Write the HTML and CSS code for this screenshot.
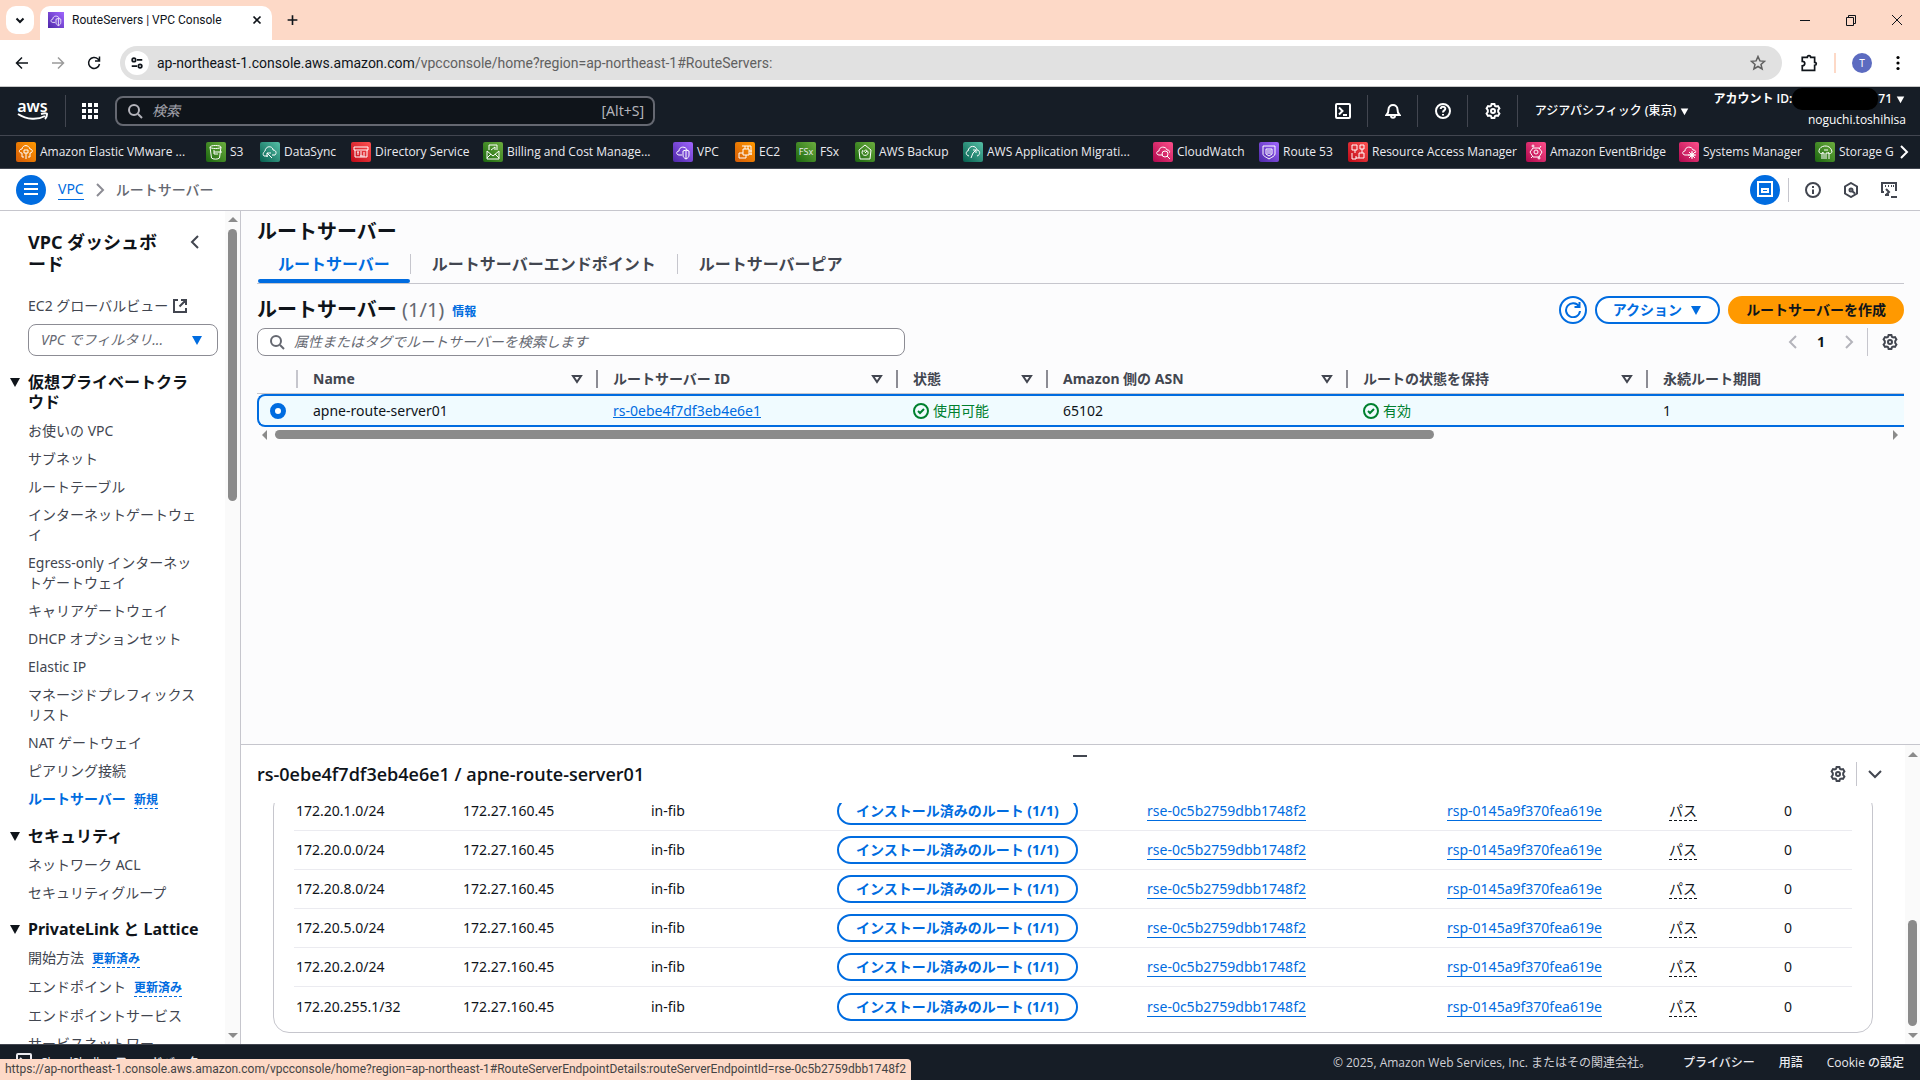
FILE: index.html
```html
<!DOCTYPE html>
<html lang="ja">
<head>
  <meta charset="UTF-8" />
  <meta name="viewport" content="width=device-width, initial-scale=1.0"/>
  <title>RouteServers | VPC Console</title>
  <link rel="stylesheet" href="styles.css">
</head>
<body>
  <!-- Shared icons -->
  <svg class="sprite" aria-hidden="true">
    <symbol id="i-gear" viewBox="0 0 16 16"><path d="M6.600 1h2.800l.5 1.800 1.300.7 1.800-.4 1.400 2.400L13.200 7v2l1.200 1.500-1.400 2.400-1.800-.4-1.300.7-.5 1.800H6.600l-.5-1.800-1.300-.7-1.800.4-1.400-2.400L2.800 9V7L1.600 5.500 3 3.100l1.800.4 1.300-.7z"/><circle cx="8" cy="8" r="2"/></symbol>
    <symbol id="i-search" viewBox="0 0 16 16"><circle cx="7" cy="7" r="5"/><path d="M11 11l4 4"/></symbol>
    <symbol id="i-left" viewBox="0 0 16 16"><path d="M11 2L5 8l6 6"/></symbol>
    <symbol id="i-right" viewBox="0 0 16 16"><path d="M5 2l6 6-6 6"/></symbol>
    <symbol id="i-down" viewBox="0 0 16 16"><path d="M2 5l6 6 6-6"/></symbol>
    <symbol id="i-filter" viewBox="0 0 16 16"><path d="M4 5h8l-4 6z"/></symbol>
    <symbol id="i-check" viewBox="0 0 16 16"><circle cx="8" cy="8" r="7"/><path d="M5 8l2 2 4-4"/></symbol>
    <symbol id="i-caret" viewBox="0 0 12 12"><path d="M1 2h10L6 11z"/></symbol>
    <symbol id="i-cloud" viewBox="0 0 20 20"><path d="M10 13H6c-3 0-3-4 0-4 0-5 7-5 8-1 3 0 3 2 2 3"/></symbol>
  </svg>

  <div class="tabstrip">
    <button class="tab-search" aria-label="タブを検索"><svg class="ic" viewBox="0 0 16 16"><path d="M4.500 6.500L8 10l3.500-3.500"/></svg></button>
    <div class="browser-tab">
      <span class="svc purple"><svg viewBox="0 0 20 20"><path d="M9 13H6c-3 0-3-4 0-4 0-5 7-5 8-1M10 9l3-1 3 1v4c0 2-1 3-3 4-2-1-3-2-3-4zM13 8v9"/></svg></span>
      <span class="browser-tab-title">RouteServers | VPC Console</span>
      <button class="plain" aria-label="閉じる"><svg class="ic" viewBox="0 0 16 16"><path d="M4 4l8 8M12 4l-8 8"/></svg></button>
    </div>
    <button class="plain new-tab" aria-label="新しいタブ"><svg class="ic" viewBox="0 0 16 16"><path d="M8 2v12M2 8h12"/></svg></button>
    <div class="window-controls">
      <button class="plain" aria-label="最小化"><svg class="thin" viewBox="0 0 16 16"><path d="M3 8.500h10"/></svg></button>
      <button class="plain" aria-label="元に戻す"><svg class="thin" viewBox="0 0 16 16"><path d="M3.500 5.500h7v8h-7zM5.500 5.500v-2h7v8h-2"/></svg></button>
      <button class="plain" aria-label="ウィンドウを閉じる"><svg class="thin" viewBox="0 0 16 16"><path d="M3 3l10 10M13 3L3 13"/></svg></button>
    </div>
  </div>

  <div class="toolbar">
    <button class="plain" aria-label="戻る"><svg class="ic" viewBox="0 0 16 16"><path d="M14 8H2.500M8 2.500L2.500 8 8 13.500"/></svg></button>
    <button class="plain disabled" aria-label="進む"><svg class="ic" viewBox="0 0 16 16"><path d="M2 8h11.500M8 2.500L13.500 8 8 13.500"/></svg></button>
    <button class="plain" aria-label="再読み込み"><svg class="ic" viewBox="0 0 16 16"><path d="M13.500 9A5.500 5.500 0 1 1 12 4l1.500 1.500M13.500 1.500v4.500H9"/></svg></button>
    <div class="address">
      <span class="site-info"><svg class="ic" viewBox="0 0 16 16"><circle cx="4.500" cy="4.500" r="2"/><path d="M8 4.500h6M2 11.500h6"/><circle cx="11.500" cy="11.500" r="2"/></svg></span>
      <span class="url">ap-northeast-1.console.aws.amazon.com<span class="url-path">/vpcconsole/home?region=ap-northeast-1#RouteServers:</span></span>
      <button class="plain star" aria-label="ブックマーク"><svg class="ic" viewBox="0 0 16 16"><path d="M8 1.500l1.900 4.400 4.600.4-3.500 3.100 1.100 4.600L8 11.500 3.900 14 5 9.400 1.500 6.300l4.600-.4z"/></svg></button>
    </div>
    <button class="plain ext" aria-label="拡張機能"><svg class="ic" viewBox="0 0 16 16"><path d="M2 3h4.500c0-2 3-2 3 0H13v4.500c2 0 2 2.500 0 2.500v4.500H2v-4c3 0 3-4 0-4z"/></svg></button>
    <span class="toolbar-sep"></span>
    <span class="avatar">T</span>
    <button class="plain" aria-label="メニュー"><svg class="dots" viewBox="0 0 16 16"><circle cx="8" cy="2.500" r="1.600"/><circle cx="8" cy="8" r="1.600"/><circle cx="8" cy="13.500" r="1.600"/></svg></button>
  </div>

  <header class="aws-header">
    <a class="aws-logo" href="#" aria-label="aws"><span>aws</span><svg viewBox="0 0 32 10"><path d="M1 2c9 6 20 6 27 2"/><path d="M24 2c3-1 6-1 6 0s-1 4-2 5"/></svg></a>
    <button class="plain apps" aria-label="サービス"><svg viewBox="0 0 16 16"><path d="M0 0h4v4H0zM6 0h4v4H6zM12 0h4v4h-4zM0 6h4v4H0zM6 6h4v4H6zM12 6h4v4h-4zM0 12h4v4H0zM6 12h4v4H6zM12 12h4v4h-4z"/></svg></button>
    <label class="global-search">
      <svg class="ic"><use href="#i-search"/></svg>
      <input type="text" placeholder="検索" aria-label="検索">
      <span>[Alt+S]</span>
    </label>
    <div class="header-icons">
      <button class="plain" aria-label="CloudShell"><svg class="ic" viewBox="0 0 16 16"><rect x="1" y="1" width="14" height="14" rx="1"/><path d="M4 4.500L7.500 8 4 11.500M8 12h4"/></svg></button>
      <button class="plain" aria-label="通知"><svg class="ic" viewBox="0 0 16 16"><path d="M1.500 12c2-2 2-3 2-5.500 0-6 9-6 9 0 0 2.500 0 3.500 2 5.500zM6 12.500c0 3 4 3 4 0"/></svg></button>
      <button class="plain" aria-label="ヘルプ"><svg class="ic" viewBox="0 0 16 16"><circle cx="8" cy="8" r="7"/><path d="M5.700 6c0-3 4.600-3 4.600-.3C10.300 7.500 8 7.300 8 9.500M8 11v1.500"/></svg></button>
      <button class="plain" aria-label="設定"><svg class="ic"><use href="#i-gear"/></svg></button>
    </div>
    <button class="plain region">アジアパシフィック (東京) <svg class="caret"><use href="#i-caret"/></svg></button>
    <div class="account">
      <div class="account-id">アカウント ID:<span class="redacted"></span>71 <svg class="caret"><use href="#i-caret"/></svg></div>
      <div class="account-user">noguchi.toshihisa</div>
    </div>
  </header>

  <nav class="favorites">
    <a href="#"><span class="svc orange"><svg viewBox="0 0 20 20"><path d="M6 11c-4 0-3-4 0-4 1-5 7-4 8 0 3 0 3 4 0 4M8 8h4v3H8zM6 11v4h2M10 11v6M14 11v4h-2"/></svg></span>Amazon Elastic VMware ...</a>
    <a href="#"><span class="svc green"><svg viewBox="0 0 20 20"><path d="M4 5c0-2 11-2 11 0s-11 2-11 0l1.500 11c1 1.500 7 1.500 8 0L15 5M8 10h8M8 8v4h4"/></svg></span>S3</a>
    <a href="#"><span class="svc teal"><svg viewBox="0 0 20 20"><path d="M8 14H4c-2-2 0-4 1-5 1-6 8-5 8-1 3 0 4 3 2 5h-3M7 11l5 5M7 15v-4h4"/></svg></span>DataSync</a>
    <a href="#"><span class="svc red"><svg viewBox="0 0 20 20"><path d="M3 5h14v3H3zM4 8v7h12V8M7 10v3M10 9v5M13 10v3M6 10h2M9 14h5"/></svg></span>Directory Service</a>
    <a href="#"><span class="svc green"><svg viewBox="0 0 20 20"><path d="M4 9v8h12V9l-6 5zM4 16l4-4M16 16l-4-4M6 8V3h8v5M8 8l4-3M12 5v3"/></svg></span>Billing and Cost Manage...</a>
    <a href="#"><span class="svc purple"><svg viewBox="0 0 20 20"><path d="M9 13H6c-3 0-3-4 0-4 0-5 7-5 8-1M10 9l3-1 3 1v4c0 2-1 3-3 4-2-1-3-2-3-4zM13 8v9"/></svg></span>VPC</a>
    <a href="#"><span class="svc orange"><svg viewBox="0 0 20 20"><path d="M8 7h6v6H8zM7 4h9v9M4 11v5h7v-3M4 11h4M10 4v3M13 4v3M14 9h3M14 12h3"/></svg></span>EC2</a>
    <a href="#"><span class="svc green fsx">FSx</span>FSx</a>
    <a href="#"><span class="svc green"><svg viewBox="0 0 20 20"><path d="M4 8l6-5 6 5-1 9H5zM8 8l-1 2c0 5 7 4 6 0-1-3-4-2-4 0M10 11l2-2"/></svg></span>AWS Backup</a>
    <a href="#"><span class="svc teal"><svg viewBox="0 0 20 20"><path d="M6 14c-4-1-3-5-1-5 1-6 8-6 9-1 3 0 4 5 0 6M8 16l2-5 3-3M10 8h3v3"/></svg></span>AWS Application Migrati...</a>
    <a href="#"><span class="svc pink"><svg viewBox="0 0 20 20"><use href="#i-cloud"/><circle cx="12" cy="12" r="3"/><path d="M14 14l3 3"/></svg></span>CloudWatch</a>
    <a href="#"><span class="svc purple"><svg viewBox="0 0 20 20"><path d="M4 4h12v8c0 2-3 3-6 5-3-2-6-3-6-5zM7 7h6v5l-3 2-3-2zM8 9h4M8 11h4"/></svg></span>Route 53</a>
    <a href="#"><span class="svc red"><svg viewBox="0 0 20 20"><path d="M4 3h5v5H4zM12 3h4v4h-4zM4 11v6h4v-3M11 11h5v5h-5zM7 8v3M14 7v4M8 16h3"/></svg></span>Resource Access Manager</a>
    <a href="#"><span class="svc pink"><svg viewBox="0 0 20 20"><path d="M7 6h6l3 4-3 5H7l-3-5z"/><circle cx="10" cy="10" r="2"/><circle cx="7" cy="4" r="1"/><circle cx="13" cy="16" r="1"/><path d="M15 4l-2 3M5 16l2-2"/></svg></span>Amazon EventBridge</a>
    <a href="#"><span class="svc pink"><svg viewBox="0 0 20 20"><use href="#i-cloud"/><circle cx="13" cy="13" r="2"/><path d="M13 9v8M9 13h8M10 10l6 6M16 10l-6 6"/></svg></span>Systems Manager</a>
    <a href="#" class="cut"><span class="svc green"><svg viewBox="0 0 20 20"><path d="M4 10c-1-7 12-9 13 0-1 2-3 2-4 0M4 10c1 2 3 2 4 0M7 17v-6h2v6M11 17v-6h3v6M9 8h4"/></svg></span>Storage G</a>
    <button class="plain" aria-label="次へ"><svg class="ic"><use href="#i-right"/></svg></button>
  </nav>

  <div class="crumb-bar">
    <button class="round" aria-label="ナビゲーション"><svg class="ic" viewBox="0 0 16 16"><path d="M1 3h14M1 8h14M1 13h14"/></svg></button>
    <a class="crumb" href="#">VPC</a>
    <svg class="ic crumb-sep"><use href="#i-right"/></svg>
    <span class="crumb-current">ルートサーバー</span>
    <div class="crumb-tools">
      <button class="round" aria-label="分割パネル"><svg class="ic" viewBox="0 0 16 16"><path d="M1 1h14v14H1zM5 8h6v3H5z"/></svg></button>
      <span class="vsep"></span>
      <button class="plain" aria-label="情報"><svg class="ic" viewBox="0 0 16 16"><circle cx="8" cy="8" r="7"/><path d="M8 4v2M8 7.500V12"/></svg></button>
      <button class="plain" aria-label="Amazon Q"><svg class="ic" viewBox="0 0 16 16"><path d="M8 1l6 3.500v7L8 15l-6-3.500v-7z"/><circle cx="8" cy="8" r="1.500"/><path d="M9 9l3 2.500"/></svg></button>
      <button class="plain" aria-label="コンソール"><svg class="ic" viewBox="0 0 16 16"><path d="M3 10H1V1h14v8M4 4h1M7 4h1M10 4h1M12 4h1M4 13h4M5 7l3 3-3 3M10 15h6"/></svg></button>
    </div>
  </div>

  <div class="workspace">
    <aside class="sidebar">
      <nav class="side-nav">
        <div class="side-title">
          <a href="#">VPC ダッシュボード</a>
          <button class="plain" aria-label="閉じる"><svg class="ic"><use href="#i-left"/></svg></button>
        </div>
        <a class="global-view" href="#">EC2 グローバルビュー <svg class="ic" viewBox="0 0 16 16"><path d="M6 2H2v12h12v-4M9 2h5v5M14 2L7.500 8.500"/></svg></a>
        <div class="vpc-filter">
          <select aria-label="VPC でフィルタリング"><option>VPC でフィルタリ...</option></select>
          <svg class="caret"><use href="#i-caret"/></svg>
        </div>
        <h3><svg class="caret"><use href="#i-caret"/></svg>仮想プライベートクラウド</h3>
        <ul>
          <li><a href="#">お使いの VPC</a></li>
          <li><a href="#">サブネット</a></li>
          <li><a href="#">ルートテーブル</a></li>
          <li><a href="#">インターネットゲートウェイ</a></li>
          <li><a href="#">Egress-only インターネットゲートウェイ</a></li>
          <li><a href="#">キャリアゲートウェイ</a></li>
          <li><a href="#">DHCP オプションセット</a></li>
          <li><a href="#">Elastic IP</a></li>
          <li><a href="#">マネージドプレフィックスリスト</a></li>
          <li><a href="#">NAT ゲートウェイ</a></li>
          <li><a href="#">ピアリング接続</a></li>
          <li><a class="current" href="#">ルートサーバー</a><span class="tag">新規</span></li>
        </ul>
        <h3><svg class="caret"><use href="#i-caret"/></svg>セキュリティ</h3>
        <ul>
          <li><a href="#">ネットワーク ACL</a></li>
          <li><a href="#">セキュリティグループ</a></li>
        </ul>
        <h3><svg class="caret"><use href="#i-caret"/></svg>PrivateLink と Lattice</h3>
        <ul>
          <li><a href="#">開始方法</a><span class="tag">更新済み</span></li>
          <li><a href="#">エンドポイント</a><span class="tag">更新済み</span></li>
          <li><a href="#">エンドポイントサービス</a></li>
          <li><a href="#">サービスネットワー</a></li>
        </ul>
      </nav>
      <div class="vscroll">
        <span class="arrow up"></span>
        <span class="track"><span class="thumb thumb-side"></span></span>
        <span class="arrow down"></span>
      </div>
    </aside>

    <div class="content">
      <main class="main">
        <h1>ルートサーバー</h1>
        <div class="tabs" role="tablist">
          <button role="tab" class="active" aria-selected="true">ルートサーバー</button>
          <button role="tab">ルートサーバーエンドポイント</button>
          <button role="tab">ルートサーバーピア</button>
        </div>
        <div class="list-head">
          <h2>ルートサーバー <span class="count">(1/1)</span></h2>
          <a class="info" href="#">情報</a>
          <div class="actions">
            <button class="btn btn-icon" aria-label="更新"><svg class="ic" viewBox="0 0 16 16"><path d="M15 9A7 7 0 1 1 14 4.500M14.500 0v5H9.500"/></svg></button>
            <button class="btn btn-action">アクション <svg class="caret"><use href="#i-caret"/></svg></button>
            <button class="btn btn-primary">ルートサーバーを作成</button>
          </div>
        </div>
        <div class="filter-row">
          <label class="filter-box">
            <svg class="ic"><use href="#i-search"/></svg>
            <input type="text" placeholder="属性またはタグでルートサーバーを検索します" aria-label="ルートサーバーを検索">
          </label>
          <div class="pager">
            <button class="plain off" aria-label="前のページ"><svg class="ic"><use href="#i-left"/></svg></button>
            <span class="page">1</span>
            <button class="plain off" aria-label="次のページ"><svg class="ic"><use href="#i-right"/></svg></button>
            <span class="vsep"></span>
            <button class="plain" aria-label="表示設定"><svg class="ic"><use href="#i-gear"/></svg></button>
          </div>
        </div>
        <table class="servers">
          <colgroup><col class="c-radio"><col class="c-wide"><col class="c-wide"><col class="c-state"><col class="c-wide"><col class="c-wide"><col></colgroup>
          <thead>
            <tr>
              <th></th>
              <th><div class="th">Name <svg class="ic"><use href="#i-filter"/></svg></div></th>
              <th><div class="th">ルートサーバー ID <svg class="ic"><use href="#i-filter"/></svg></div></th>
              <th><div class="th">状態 <svg class="ic"><use href="#i-filter"/></svg></div></th>
              <th><div class="th">Amazon 側の ASN <svg class="ic"><use href="#i-filter"/></svg></div></th>
              <th><div class="th">ルートの状態を保持 <svg class="ic"><use href="#i-filter"/></svg></div></th>
              <th><div class="th">永続ルート期間</div></th>
            </tr>
          </thead>
          <tbody>
            <tr>
              <td><input type="radio" name="server" aria-label="apne-route-server01" checked></td>
              <td>apne-route-server01</td>
              <td><a href="#">rs-0ebe4f7df3eb4e6e1</a></td>
              <td><span class="ok"><svg class="ic"><use href="#i-check"/></svg>使用可能</span></td>
              <td>65102</td>
              <td><span class="ok"><svg class="ic"><use href="#i-check"/></svg>有効</span></td>
              <td>1</td>
            </tr>
          </tbody>
        </table>
        <div class="hscroll">
          <span class="arrow left"></span>
          <span class="track"><span class="thumb"></span></span>
          <span class="arrow right"></span>
        </div>
      </main>

      <section class="split">
        <div class="split-body">
          <div class="handle"></div>
          <div class="split-head">
            <h2>rs-0ebe4f7df3eb4e6e1 / apne-route-server01</h2>
            <button class="plain" aria-label="設定"><svg class="ic"><use href="#i-gear"/></svg></button>
            <span class="vsep"></span>
            <button class="plain" aria-label="閉じる"><svg class="ic"><use href="#i-down"/></svg></button>
          </div>
          <div class="split-scroll">
            <div class="panel">
              <table class="routes">
                <colgroup><col class="r-prefix"><col class="r-hop"><col class="r-fib"><col class="r-btn"><col class="r-rse"><col class="r-rsp"><col class="r-path"><col></colgroup>
                <tbody>
                  <tr>
                    <td>172.20.1.0/24</td><td>172.27.160.45</td><td>in-fib</td>
                    <td><button class="btn">インストール済みのルート (1/1)</button></td>
                    <td><a href="#">rse-0c5b2759dbb1748f2</a></td><td><a href="#">rsp-0145a9f370fea619e</a></td>
                    <td><span class="path">パス</span></td><td>0</td>
                  </tr>
                  <tr>
                    <td>172.20.0.0/24</td><td>172.27.160.45</td><td>in-fib</td>
                    <td><button class="btn">インストール済みのルート (1/1)</button></td>
                    <td><a href="#">rse-0c5b2759dbb1748f2</a></td><td><a href="#">rsp-0145a9f370fea619e</a></td>
                    <td><span class="path">パス</span></td><td>0</td>
                  </tr>
                  <tr>
                    <td>172.20.8.0/24</td><td>172.27.160.45</td><td>in-fib</td>
                    <td><button class="btn">インストール済みのルート (1/1)</button></td>
                    <td><a href="#">rse-0c5b2759dbb1748f2</a></td><td><a href="#">rsp-0145a9f370fea619e</a></td>
                    <td><span class="path">パス</span></td><td>0</td>
                  </tr>
                  <tr>
                    <td>172.20.5.0/24</td><td>172.27.160.45</td><td>in-fib</td>
                    <td><button class="btn">インストール済みのルート (1/1)</button></td>
                    <td><a href="#">rse-0c5b2759dbb1748f2</a></td><td><a href="#">rsp-0145a9f370fea619e</a></td>
                    <td><span class="path">パス</span></td><td>0</td>
                  </tr>
                  <tr>
                    <td>172.20.2.0/24</td><td>172.27.160.45</td><td>in-fib</td>
                    <td><button class="btn">インストール済みのルート (1/1)</button></td>
                    <td><a href="#">rse-0c5b2759dbb1748f2</a></td><td><a href="#">rsp-0145a9f370fea619e</a></td>
                    <td><span class="path">パス</span></td><td>0</td>
                  </tr>
                  <tr>
                    <td>172.20.255.1/32</td><td>172.27.160.45</td><td>in-fib</td>
                    <td><button class="btn">インストール済みのルート (1/1)</button></td>
                    <td><a href="#">rse-0c5b2759dbb1748f2</a></td><td><a href="#">rsp-0145a9f370fea619e</a></td>
                    <td><span class="path">パス</span></td><td>0</td>
                  </tr>
                </tbody>
              </table>
            </div>
          </div>
        </div>
        <div class="vscroll">
          <span class="arrow up"></span>
          <span class="track track-end"><span class="thumb thumb-split"></span></span>
          <span class="arrow down"></span>
        </div>
      </section>
    </div>
  </div>

  <footer class="footer">
    <a href="#" class="shell"><svg class="ic" viewBox="0 0 16 16"><rect x="1" y="1" width="14" height="14" rx="1"/><path d="M4 5l3 3-3 3M8 11h4"/></svg>CloudShell</a>
    <a href="#">フィードバック</a>
    <span class="copyright">© 2025, Amazon Web Services, Inc. またはその関連会社。</span>
    <a href="#">プライバシー</a>
    <a href="#">用語</a>
    <a href="#">Cookie の設定</a>
  </footer>

  <!-- Link target shown by the browser -->
  <div class="status-bubble">https://ap-northeast-1.console.aws.amazon.com/vpcconsole/home?region=ap-northeast-1#RouteServerEndpointDetails:routeServerEndpointId=rse-0c5b2759dbb1748f2</div>
</body>
</html>
```
FILE: styles.css
```css
* {
  box-sizing: border-box;
}

body {
  margin: 0;
  height: 100vh;
  display: flex;
  flex-direction: column;
  overflow: hidden;
  font-family: "Noto Sans", "Noto Sans CJK JP", sans-serif;
  font-size: 14px;
  line-height: 20px;
  color: #0f141a;
  background: #fff;
}

button, input, select {
  font: inherit;
  color: inherit;
}

button {
  cursor: pointer;
}

a {
  color: #006ce0;
}

h1, h2, h3, ul {
  margin: 0;
  padding: 0;
}

.sprite {
  display: none;
}

.ic, .thin {
  width: 16px;
  height: 16px;
  flex: none;
  fill: none;
  stroke: currentColor;
  stroke-width: 2;
}

.thin {
  stroke-width: 1;
}

.caret {
  width: 12px;
  height: 12px;
  flex: none;
  fill: currentColor;
}

.plain {
  display: flex;
  align-items: center;
  justify-content: center;
  padding: 0;
  border: 0;
  background: none;
}

.vsep {
  width: 1px;
  background: #c6c6cd;
}

/* Browser chrome */
.tabstrip {
  flex: none;
  height: 40px;
  display: flex;
  align-items: flex-start;
  padding: 6px 6px 0;
  background: #fdd9c7;
}

.tab-search {
  width: 28px;
  height: 28px;
  padding: 6px;
  border: 0;
  border-radius: 10px;
  background: #fff;
}

.tab-search svg {
  display: block;
}

.browser-tab {
  display: flex;
  align-items: center;
  gap: 8px;
  width: 232px;
  height: 34px;
  margin-left: 6px;
  padding: 0 8px 6px;
  border-radius: 10px 10px 0 0;
  background: #fff;
  font-family: Roboto, sans-serif;
  font-size: 12px;
}

.browser-tab .svc {
  width: 16px;
  height: 16px;
  border-radius: 0;
}

.browser-tab-title {
  flex: 1;
}

.browser-tab .ic {
  width: 14px;
  height: 14px;
}

.new-tab {
  width: 28px;
  height: 28px;
  margin-left: 6px;
}

.new-tab svg {
  width: 13px;
}

.window-controls {
  display: flex;
  gap: 30px;
  margin-left: auto;
  padding: 6px 9px;
}

.toolbar {
  flex: none;
  height: 47px;
  display: flex;
  align-items: center;
  padding: 0 14px;
  border-bottom: 1px solid #c8c8c8;
  gap: 20px;
}

.toolbar > .plain .ic {
  stroke-width: 1.5;
}

.disabled {
  color: #9b9b9b;
}

.address {
  flex: 1;
  display: flex;
  align-items: center;
  height: 34px;
  margin: 0 -2px;
  padding: 0 16px 0 5px;
  border-radius: 17px;
  background: #e1e1e1;
  font-family: Roboto, sans-serif;
}

.site-info {
  display: flex;
  align-items: center;
  justify-content: center;
  width: 24px;
  height: 24px;
  margin-right: 8px;
  border-radius: 50%;
  background: #fff;
}

.site-info .ic {
  width: 14px;
}

.url {
  flex: 1;
}

.url-path, .star {
  color: #606060;
}

.star .ic {
  stroke-width: 1.5;
}

.ext .ic {
  width: 18px;
  height: 18px;
}

.toolbar-sep {
  width: 2px;
  height: 20px;
  margin: 0 -4px;
  background: #fdd9c7;
}

.avatar {
  width: 20px;
  height: 20px;
  margin-right: -2px;
  border-radius: 50%;
  background: #5c6bc0;
  color: #fff;
  font-size: 10px;
  text-align: center;
}

.dots {
  width: 16px;
  height: 16px;
}

/* AWS header */
.aws-header {
  flex: none;
  height: 49px;
  display: flex;
  align-items: center;
  border-bottom: 1px solid #424650;
  background: #161d26;
  color: #fff;
}

.aws-logo {
  display: flex;
  flex-direction: column;
  align-items: center;
  justify-content: center;
  width: 66px;
  height: 32px;
  border-right: 1px solid #424650;
  color: #fff;
  font-size: 16px;
  font-weight: 600;
  line-height: 12px;
  text-decoration: none;
}

.aws-logo svg {
  width: 32px;
  height: 10px;
  fill: none;
  stroke: #fff;
  stroke-width: 2;
}

.apps {
  width: 49px;
  padding-right: 2px;
}

.apps svg {
  width: 16px;
  height: 16px;
  fill: #fff;
}

.global-search {
  display: flex;
  align-items: center;
  width: 540px;
  height: 30px;
  padding: 0 9px 0 10px;
  border: 2px solid #656871;
  border-radius: 8px;
  background: #0f141a;
  color: #b4b4bb;
}

.global-search input, .filter-box input {
  flex: 1;
  min-width: 0;
  padding: 0 9px;
  border: 0;
  outline: 0;
  background: none;
}

.global-search input::placeholder {
  color: #a4a4ad;
  font-style: italic;
}

.header-icons {
  display: flex;
  margin-left: auto;
}

.header-icons button {
  width: 50px;
  height: 32px;
  border-right: 1px solid #424650;
}

.region {
  width: 190px;
  gap: 4px;
  padding-right: 2px;
  font-size: 12px;
  font-weight: 500;
}

.region .caret, .account .caret {
  width: 9px;
  height: 9px;
}

.account {
  width: 212px;
  padding: 0 14px 4px 0;
  font-family: "Open Sans", "Noto Sans CJK JP", sans-serif;
  font-size: 12px;
  text-align: right;
}

.account-id {
  display: flex;
  align-items: center;
  justify-content: flex-end;
  font-weight: 600;
}

.account .caret {
  margin: 0 1px 0 4px;
}

.redacted {
  width: 86px;
  height: 22px;
  border-radius: 10px;
  background: #000;
}

/* Favorites */
.favorites {
  flex: none;
  height: 33px;
  display: grid;
  grid-template-columns: 190px 54px 91px 132px 190px 62px 61px 59px 108px 190px 106px 89px 178px 153px 136px 79px 1fr;
  align-items: center;
  padding: 0 6px 0 16px;
  border-bottom: 1px solid #424650;
  background: #161d26;
  color: #fff;
}

.favorites a {
  display: flex;
  align-items: center;
  gap: 4px;
  color: #ebebf0;
  font-family: "Open Sans", sans-serif;
  font-size: 12px;
  text-decoration: none;
  white-space: nowrap;
}

.favorites .cut {
  overflow: hidden;
}

.svc {
  display: block;
  flex: none;
  width: 20px;
  height: 20px;
  border-radius: 2px;
}

.svc svg {
  display: block;
  width: 100%;
  height: 100%;
  fill: none;
  stroke: #fff;
  stroke-width: 1;
}

.fsx {
  font-size: 9px;
  text-align: center;
}

.orange { background: linear-gradient(45deg, #d45b07, #ff9900); }
.green { background: linear-gradient(45deg, #1b660f, #6cae3e); }
.teal { background: linear-gradient(45deg, #055f4e, #56c0a7); }
.red { background: linear-gradient(45deg, #bd0816, #ff5252); }
.purple { background: linear-gradient(45deg, #4d27a8, #a166ff); }
.pink { background: linear-gradient(45deg, #b0084d, #ff4f8b); }

/* Breadcrumbs */
.crumb-bar {
  flex: none;
  height: 42px;
  display: flex;
  align-items: center;
  padding: 0 23px 0 16px;
  border-bottom: 1px solid #c6c6cd;
}

.round {
  display: flex;
  align-items: center;
  justify-content: center;
  width: 30px;
  height: 30px;
  padding: 0 0 2px;
  border: 0;
  border-radius: 50%;
  background: #006ce0;
  color: #fff;
}

.crumb {
  margin-left: 12px;
  border-bottom: 1px solid #006ce0;
  text-decoration: none;
}

.crumb-sep {
  margin: 0 8px;
  color: #8c8c94;
}

.crumb-current {
  color: #656871;
  font-weight: 500;
}

.crumb-tools {
  display: flex;
  align-items: center;
  margin-left: auto;
  color: #424650;
}

.crumb-tools .vsep {
  height: 24px;
  margin: 0 16px 0 8px;
}

.crumb-tools .plain + .plain {
  margin-left: 22px;
}

/* Sidebar */
.workspace {
  flex: 1;
  min-height: 0;
  display: flex;
}

.sidebar {
  flex: none;
  width: 241px;
  display: flex;
  overflow: hidden;
  border-right: 1px solid #c6c6cd;
}

.side-nav {
  flex: 1;
  padding: 20px 7px 0 28px;
}

.side-nav a {
  color: #424650;
  text-decoration: none;
}

.side-title {
  display: flex;
  align-items: flex-start;
  justify-content: space-between;
  padding-right: 15px;
  font-size: 18px;
  font-weight: 700;
  line-height: 22px;
}

.side-title a {
  width: 136px;
  color: #0f141a;
  word-break: break-all;
}

.side-title .plain {
  height: 22px;
  color: #424650;
}

.side-nav .global-view {
  display: flex;
  align-items: center;
  gap: 4px;
  margin: 21px 0 8px;
}

.vpc-filter {
  position: relative;
  color: #006ce0;
}

.vpc-filter select {
  width: 100%;
  height: 32px;
  padding: 0 36px 0 12px;
  border: 1px solid #8c8c94;
  border-radius: 8px;
  appearance: none;
  background: #fff;
  color: #656871;
  font-style: italic;
}

.vpc-filter .caret {
  position: absolute;
  top: 10px;
  right: 15px;
}

.side-nav h3 {
  position: relative;
  margin-top: 16px;
  padding: 0 15px 1px 0;
  font-size: 16px;
  line-height: 20px;
  word-break: break-all;
}

.side-nav h3 .caret {
  position: absolute;
  top: 4px;
  left: -19px;
}

.side-nav ul {
  list-style: none;
}

.side-nav li {
  margin-top: 8px;
  padding-right: 20px;
  word-break: break-all;
}

.side-nav .current {
  color: #006ce0;
  font-weight: 700;
}

.tag {
  margin-left: 8px;
  border-bottom: 1px dashed #006ce0;
  color: #006ce0;
  font-size: 12px;
  font-weight: 700;
}

/* Scrollbars */
.vscroll {
  flex: none;
  width: 15px;
  display: flex;
  flex-direction: column;
  align-items: center;
  padding: 6px 0;
  background: #fafafa;
}

.track {
  flex: 1;
  display: flex;
}

.vscroll .track {
  margin: 7px 0;
}

.track-end {
  align-items: flex-end;
}

.thumb {
  border-radius: 5px;
  background: #8b8b8b;
}

.thumb-side, .thumb-split {
  width: 9px;
  height: 272px;
}

.thumb-split {
  height: 106px;
}

.arrow {
  border: 5px solid transparent;
}

.up {
  border-top: 0;
  border-bottom-color: #8b8b8b;
}

.down {
  border-bottom: 0;
  border-top-color: #8b8b8b;
}

.left {
  border-left: 0;
  border-right-color: #8b8b8b;
}

.right {
  border-right: 0;
  border-left-color: #8b8b8b;
}

/* Main */
.content {
  flex: 1;
  min-width: 0;
  display: flex;
  flex-direction: column;
}

.main {
  flex: 1;
  min-height: 0;
  padding: 9px 16px 0;
  background: #fcfcfd;
}

h1, .list-head h2 {
  font-size: 20px;
  line-height: 24px;
}

.tabs {
  display: flex;
  align-items: center;
  height: 40px;
  border-bottom: 1px solid #c6c6cd;
  padding-left: 1px;
}

.tabs button {
  height: 20px;
  padding: 0 20px;
  border: 0;
  border-right: 1px solid #c6c6cd;
  background: none;
  color: #424650;
  font-size: 16px;
  font-weight: 700;
  line-height: 20px;
}

.tabs button + button {
  padding: 0 21px;
}

.tabs button:last-child {
  border-right: 0;
}

.tabs .active {
  position: relative;
  color: #006ce0;
}

.tabs .active::after {
  content: "";
  position: absolute;
  left: 0;
  right: 0;
  bottom: -9px;
  height: 4px;
  border-radius: 2px;
  background: #006ce0;
}

.list-head {
  display: flex;
  align-items: center;
  margin-top: 12px;
  height: 28px;
}

.count {
  color: #656871;
  font-weight: 400;
}

.info {
  margin: 4px 0 0 8px;
  font-size: 12px;
  font-weight: 700;
  text-decoration: none;
}

.actions {
  display: flex;
  gap: 8px;
  margin-left: auto;
}

.btn {
  height: 28px;
  padding: 0 16px;
  border: 2px solid #006ce0;
  border-radius: 14px;
  background: #fff;
  color: #006ce0;
  font-weight: 700;
  line-height: 20px;
  white-space: nowrap;
}

.btn-icon {
  width: 28px;
  padding: 4px;
}

.btn-icon svg {
  display: block;
}

.btn-action {
  display: flex;
  align-items: center;
  gap: 8px;
}

.btn-primary {
  border-color: #ff9900;
  background: #ff9900;
  color: #0f141a;
}

.filter-row {
  display: flex;
  align-items: center;
  justify-content: space-between;
  margin-top: 4px;
}

.filter-box {
  display: flex;
  align-items: center;
  width: 648px;
  height: 28px;
  padding: 0 11px;
  border: 1px solid #8c8c94;
  border-radius: 8px;
  background: #fff;
  color: #656871;
}

.filter-box input::placeholder {
  color: #656871;
  font-style: italic;
}

.pager {
  display: flex;
  align-items: center;
  padding-right: 6px;
  color: #424650;
}

.off {
  color: #b4b4bb;
}

.page {
  width: 40px;
  color: #0f141a;
  font-weight: 700;
  text-align: center;
}

.pager .vsep {
  height: 28px;
  margin: 0 14px 0 10px;
}

.servers {
  width: 100%;
  margin-top: 10px;
  border-collapse: separate;
  border-spacing: 0;
  table-layout: fixed;
}

.c-radio { width: 39px; }
.c-wide { width: 300px; }
.c-state { width: 150px; }

.servers th {
  height: 28px;
  padding: 0 0 2px;
  border-bottom: 1px solid #c6c6cd;
  color: #424650;
  text-align: left;
}

.th {
  display: flex;
  align-items: center;
  justify-content: space-between;
  height: 18px;
  padding: 0 11px 0 15px;
  border-left: 2px solid #8c8c94;
}

.servers th:nth-child(2) .th {
  border-left-color: #c6c6cd;
}

.servers td {
  height: 33px;
  padding: 0 0 0 17px;
  border: 2px solid #006ce0;
  border-width: 2px 0;
  background: #f0fbff;
}

.servers td:first-child {
  padding-left: 11px;
  border-left-width: 2px;
  border-radius: 8px 0 0 8px;
}

.servers input {
  display: block;
  width: 16px;
  height: 16px;
  margin: 0;
  border: 5px solid #006ce0;
  border-radius: 50%;
  appearance: none;
  background: #fff;
}

.ok {
  display: flex;
  align-items: center;
  gap: 4px;
  color: #00802f;
}

.hscroll {
  display: flex;
  align-items: center;
  height: 15px;
  padding: 0 6px 0 5px;
}

.hscroll .track {
  margin: 0 8px;
}

.hscroll .thumb {
  width: 72%;
  height: 9px;
}

/* Split panel */
.split {
  flex: none;
  height: 300px;
  display: flex;
  border-top: 1px solid #c6c6cd;
}

.split .vscroll {
  padding: 7px 0 6px;
}

.split-body {
  flex: 1;
  display: flex;
  flex-direction: column;
  min-width: 0;
}

.handle {
  width: 14px;
  height: 2px;
  margin: 10px 0 5px 50%;
  background: #424650;
}

.split-head {
  display: flex;
  align-items: center;
  padding: 0 22px 0 16px;
  color: #424650;
}

.split-head h2 {
  flex: 1;
  color: #0f141a;
  font-family: "Open Sans", sans-serif;
  font-size: 18px;
  font-weight: 600;
  line-height: 24px;
}

.split-head .vsep {
  height: 24px;
  margin: 0 10px;
}

.split-scroll {
  flex: 1;
  min-height: 0;
  display: flex;
  flex-direction: column;
  justify-content: flex-end;
  margin-top: 17px;
  padding: 0 32px 11px;
  overflow: hidden;
}

.panel {
  padding: 0 20px 6px;
  border: 1px solid #c6c6cd;
  border-radius: 16px;
}

.routes {
  width: 100%;
  border-collapse: separate;
  border-spacing: 0;
  table-layout: fixed;
}

.routes .btn {
  padding: 0 17px;
}

.r-prefix { width: 167px; }
.r-hop { width: 188px; }
.r-fib { width: 186px; }
.r-btn { width: 310px; }
.r-rse { width: 300px; }
.r-rsp { width: 222px; }
.r-path { width: 115px; }

.routes td {
  height: 39px;
  padding: 0 0 0 2px;
  border-bottom: 1px solid #ebebf0;
}

.routes tr:last-child td {
  border-bottom: 0;
}

.routes a {
  border-bottom: 1px solid #006ce0;
  text-decoration: none;
}

.path {
  border-bottom: 1px dashed #0f141a;
}

/* Footer */
.footer {
  flex: none;
  height: 36px;
  display: flex;
  align-items: center;
  gap: 24px;
  padding: 0 16px;
  border-top: 1px solid #424650;
  background: #161d26;
  color: #d0d0d6;
  font-family: "Open Sans", "Noto Sans CJK JP", sans-serif;
  font-size: 12px;
}

.footer a {
  color: #ebebf0;
  font-weight: 500;
  text-decoration: none;
}

.footer .shell {
  display: flex;
  gap: 8px;
  margin-right: -8px;
}

.copyright {
  margin: 0 8px 0 auto;
}

.status-bubble {
  position: fixed;
  left: 0;
  bottom: 0;
  height: 21px;
  padding: 0 5px;
  border-radius: 0 4px 0 0;
  background: #fdd9c7;
  color: #444;
  font-family: Roboto, sans-serif;
  font-size: 12px;
}
```
